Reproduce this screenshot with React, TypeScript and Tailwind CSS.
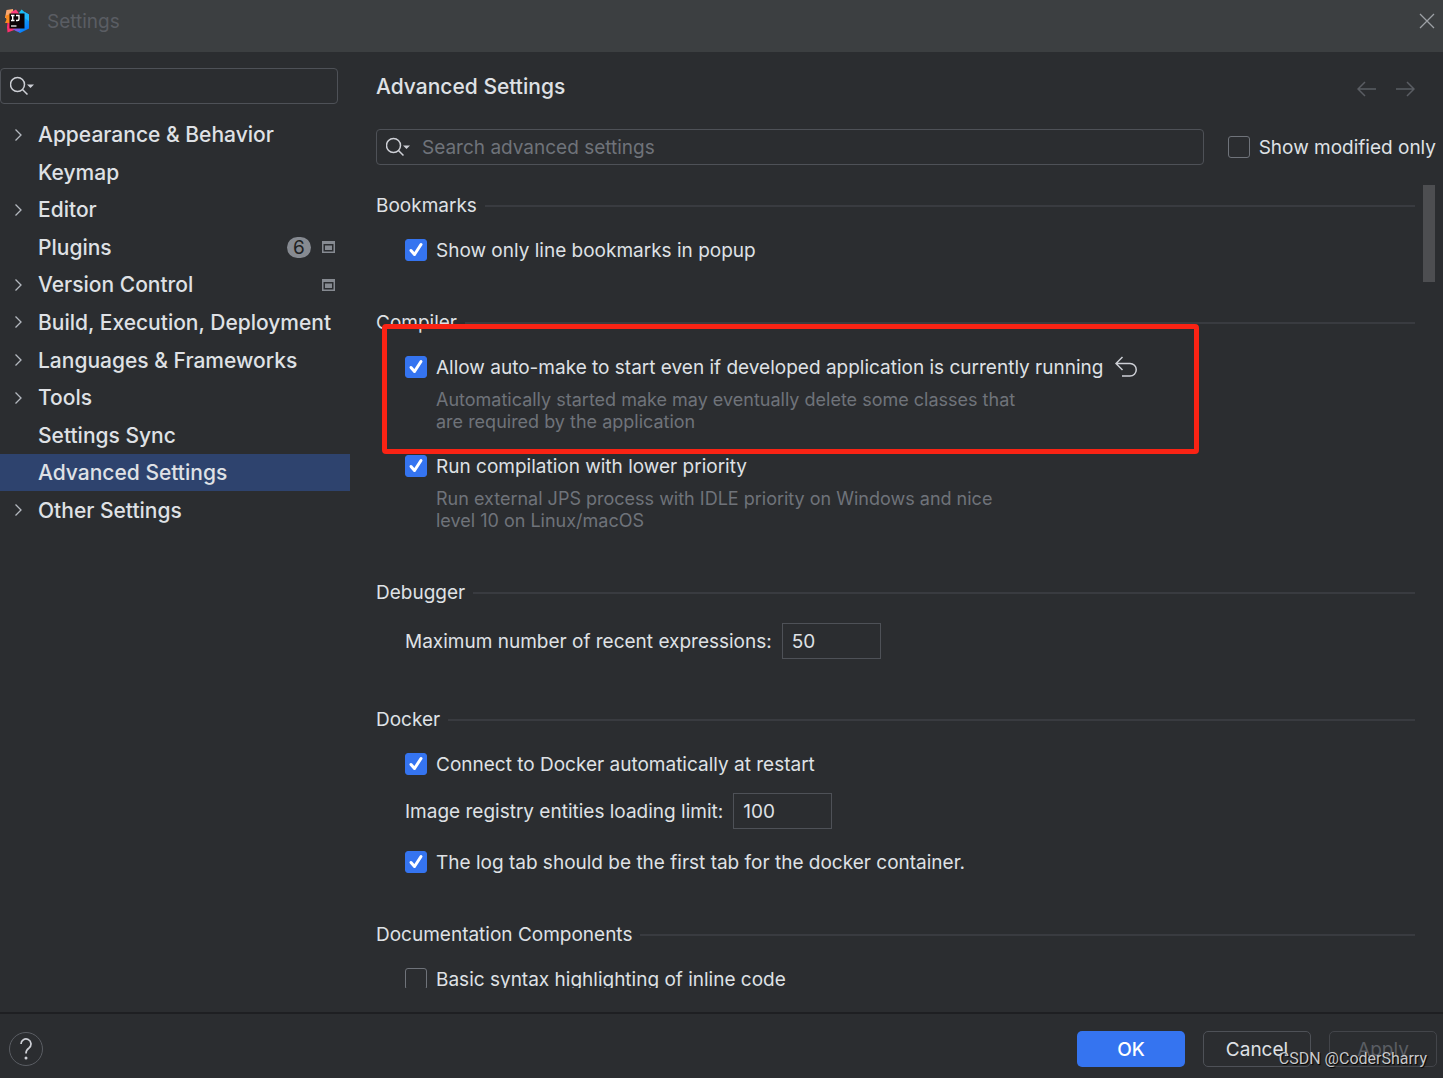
import { useState, type ReactNode } from 'react'

type TreeItem = {
  label: string
  expandable?: boolean
  updates?: number
  projectLevel?: boolean
}

const TREE: TreeItem[] = [
  { label: 'Appearance & Behavior', expandable: true },
  { label: 'Keymap' },
  { label: 'Editor', expandable: true },
  { label: 'Plugins', updates: 6, projectLevel: true },
  { label: 'Version Control', expandable: true, projectLevel: true },
  { label: 'Build, Execution, Deployment', expandable: true },
  { label: 'Languages & Frameworks', expandable: true },
  { label: 'Tools', expandable: true },
  { label: 'Settings Sync' },
  { label: 'Advanced Settings' },
  { label: 'Other Settings', expandable: true },
]

function IdeaLogo() {
  return (
    <svg className="h-6 w-6 shrink-0" viewBox="0 0 24 24" aria-hidden="true">
      <defs>
        <linearGradient id="cold" x1="0" y1="0" x2="0.5" y2="1">
          <stop offset="0" stopColor="#21d7f5" />
          <stop offset="1" stopColor="#087cfa" />
        </linearGradient>
      </defs>
      <path d="M14 4 16.500.5 19.500 3 24 5.500V19.500l-9 4.500-5-3z" fill="url(#cold)" />
      <path d="M19.500 3 24 5.500V12l-4.500-3z" fill="#22b8fa" />
      <path d="M1.500 1 8 0v8L0 9z" fill="#fba86f" />
      <path d="m6 3 5-2.500 3.500 4.500-8 3z" fill="#fe3d7b" />
      <path d="M0 7 5 5v10l-2.500-1L0 14l1.500-3.500z" fill="#fb8a1e" />
      <path d="M2.500 13.500 6 15l6 5-9.500 3.500L2 18z" fill="#fc2f6d" />
      <path d="M7 20 15 19v3l-3 .5z" fill="#7a5be0" />
      <path d="M4.500 4.500h15v15h-15z" fill="#0b0306" />
      <path d="M6 6.500h3.500M7.700 6.500v5M6 11.500h3.500M11 6.500h3v3.500q0 1.500-1.500 1.500H11" fill="none" stroke="#fff" strokeWidth="1.400" />
      <path d="M6 17h5.500" stroke="#fff" strokeWidth="1.200" />
    </svg>
  )
}

function SearchIcon() {
  return (
    <svg className="h-6 w-6 shrink-0" viewBox="0 0 24 24" fill="none" aria-hidden="true">
      <circle cx="7.500" cy="10.500" r="7" stroke="#ced0d6" strokeWidth="1.500" />
      <path d="m12.500 15.500 5 5" stroke="#ced0d6" strokeWidth="1.500" />
      <path d="M17 10.500h7L20.500 14z" fill="#ced0d6" />
    </svg>
  )
}

function ProjectIcon() {
  return (
    <svg className="h-3 w-[13px] shrink-0" viewBox="0 0 13 12" fill="none" aria-hidden="true">
      <path d="M0 0h13v12H0zM1.500 3v7.500h10V3z" fill="#868a91" fillRule="evenodd" />
      <path d="M3 4.500h7v4.500H3z" fill="#868a91" />
    </svg>
  )
}

function Checkbox({ label, checked = false }: { label: string; checked?: boolean }) {
  const [on, setOn] = useState(checked)
  return (
    <label className="flex h-6 items-center gap-[9px] whitespace-nowrap">
      <span className="grid shrink-0">
        <input
          type="checkbox"
          checked={on}
          onChange={e => setOn(e.target.checked)}
          className="col-start-1 row-start-1 h-[22px] w-[22px] appearance-none rounded-[3px] border border-[#6f737a] checked:border-[#3574f0] checked:bg-[#3574f0]"
        />
        {on && (
          <svg className="pointer-events-none col-start-1 row-start-1 h-[22px] w-[22px]" viewBox="0 0 22 22" fill="none">
            <path d="m6 11.500 3.500 4L16 5.500" stroke="#fff" strokeWidth="3" strokeLinecap="round" strokeLinejoin="round" />
          </svg>
        )}
      </span>
      {label}
    </label>
  )
}

function Field({ id, label, value }: { id: string; label: string; value: string }) {
  return (
    <div className="flex items-center gap-[10px]">
      <label htmlFor={id}>{label}</label>
      <input id={id} defaultValue={value} className="h-9 w-[99px] border border-[#4e5157] bg-transparent px-[9px] outline-none" />
    </div>
  )
}

function Hint({ children }: { children: ReactNode }) {
  return <p className="mt-[10px] max-w-[625px] pl-[31px] text-[18px] leading-[22px] text-[#6f737a]">{children}</p>
}

function Section({ title, children }: { title: string; children: ReactNode }) {
  return (
    <section className="relative mb-12">
      <div className="flex h-6 items-center gap-2">
        <h2>{title}</h2>
        <div className="mt-[2px] h-[2px] flex-1 bg-[#393b40]" />
      </div>
      <div className="pl-[29px]">{children}</div>
    </section>
  )
}

function Sidebar() {
  const [selected, setSelected] = useState('Advanced Settings')
  return (
    <aside className="w-[350px] shrink-0 pt-4">
      <div className="mr-3 flex h-9 items-center rounded-[4px] border border-[#4e5157] pl-[9px]">
        <SearchIcon />
        <input aria-label="Search settings" className="min-w-0 flex-1 bg-transparent px-2 outline-none" />
      </div>
      <ul className="mt-3 grid h-[413px] auto-rows-fr text-[21px] font-medium">
        {TREE.map(item => (
          <li key={item.label}>
            <button
              type="button"
              onClick={() => setSelected(item.label)}
              className={`flex h-full w-full items-center pr-[15px] pl-[14px] text-left ${selected === item.label ? 'bg-[#2e436e]' : ''}`}
            >
              <span className="w-6 shrink-0">
                {item.expandable && (
                  <svg className="h-3 w-[9px]" viewBox="0 0 9 12" fill="none" aria-hidden="true">
                    <path d="m1.500.5 5.500 5.500-5.500 5.500" stroke="#b4b8bf" strokeWidth="1.300" />
                  </svg>
                )}
              </span>
              <span className="flex-1 whitespace-nowrap">{item.label}</span>
              {item.updates && (
                <span className="mr-[11px] flex h-[21px] w-6 items-center justify-center rounded-full bg-[#868a91] text-[19px] font-normal text-[#1e1f22]">
                  {item.updates}
                </span>
              )}
              {item.projectLevel && <ProjectIcon />}
            </button>
          </li>
        ))}
      </ul>
    </aside>
  )
}

export default function App() {
  return (
    <div className="flex h-screen flex-col overflow-hidden bg-[#2b2d30] font-[Inter,sans-serif] text-[19px] leading-[25px] text-[#dfe1e5]">
      <header className="flex h-[52px] shrink-0 items-center bg-[#3c3f41] pr-2 pb-[10px] pl-[5px]">
        <IdeaLogo />
        <h1 className="ml-[18px] flex-1 text-[#5a5d63]">Settings</h1>
        <button type="button" aria-label="Close">
          <svg className="h-4 w-4" viewBox="0 0 16 16" fill="none">
            <path d="m1 1 14 14M15 1 1 15" stroke="#9da0a5" strokeWidth="1.300" />
          </svg>
        </button>
      </header>

      <div className="flex min-h-0 flex-1">
        <Sidebar />

        <main className="flex min-w-0 flex-1 flex-col pb-6 pl-[26px]">
          <div className="flex h-[46px] items-center justify-between pt-[22px] pr-7">
            <h2 className="text-[21px] font-medium">Advanced Settings</h2>
            <div className="flex gap-5 pt-[6px] text-[#5a5d63]">
              <button type="button" aria-label="Back" disabled>
                <svg className="h-4 w-[19px]" viewBox="0 0 19 16" fill="none">
                  <path d="M19 8H1M8 1 1 8l7 7" stroke="currentColor" strokeWidth="1.500" />
                </svg>
              </button>
              <button type="button" aria-label="Forward" disabled>
                <svg className="h-4 w-[19px]" viewBox="0 0 19 16" fill="none">
                  <path d="M0 8h18M11 1l7 7-7 7" stroke="currentColor" strokeWidth="1.500" />
                </svg>
              </button>
            </div>
          </div>

          <div className="mt-[31px] flex items-center gap-6 pr-[7px]">
            <div className="flex h-9 min-w-0 flex-1 items-center rounded-[4px] border border-[#4e5157] pl-[9px]">
              <SearchIcon />
              <input
                aria-label="Search advanced settings"
                placeholder="Search advanced settings"
                className="min-w-0 flex-1 bg-transparent px-3 outline-none placeholder:text-[#6f737a]"
              />
            </div>
            <Checkbox label="Show modified only" />
          </div>

          <div className="mt-5 flex min-h-0 flex-1 overflow-hidden">
            <div className="min-w-0 flex-1 pt-2">
              <Section title="Bookmarks">
                <div className="mt-[21px]">
                  <Checkbox label="Show only line bookmarks in popup" checked />
                </div>
              </Section>

              <Section title="Compiler">
                <div className="mt-[21px] flex h-6 items-center gap-3">
                  <Checkbox label="Allow auto-make to start even if developed application is currently running" checked />
                  <button type="button" aria-label="Reset to default">
                    <svg className="h-[22px] w-[22px]" viewBox="0 0 22 22" fill="none">
                      <path d="M7.500 1 1 7.500 7.500 14M1 7.500h14a6 6 0 0 1 0 12.500H7" stroke="#ced0d6" strokeWidth="1.500" />
                    </svg>
                  </button>
                </div>
                <Hint>Automatically started make may eventually delete some classes that are required by the application</Hint>
                <div className="mt-[21px]">
                  <Checkbox label="Run compilation with lower priority" checked />
                </div>
                <Hint>Run external JPS process with IDLE priority on Windows and nice level 10 on Linux/macOS</Hint>
                {/* highlight frame around the auto-make option */}
                <div className="pointer-events-none absolute top-[14px] right-[216px] left-[6px] h-[130px] rounded-[4px] border-5 border-[#fa2314]" />
              </Section>

              <Section title="Debugger">
                <div className="mt-[19px]">
                  <Field id="recent-expressions" label="Maximum number of recent expressions:" value="50" />
                </div>
              </Section>

              <Section title="Docker">
                <div className="mt-[21px] mb-[17px]">
                  <Checkbox label="Connect to Docker automatically at restart" checked />
                </div>
                <Field id="registry-limit" label="Image registry entities loading limit:" value="100" />
                <div className="mt-[21px]">
                  <Checkbox label="The log tab should be the first tab for the docker container." checked />
                </div>
              </Section>

              <Section title="Documentation Components">
                <div className="mt-[21px]">
                  <Checkbox label="Basic syntax highlighting of inline code" />
                </div>
              </Section>
            </div>
            <div className="mr-2 ml-2 h-[97px] w-3 shrink-0 bg-[#4d4e51]" />
          </div>
        </main>
      </div>

      <footer className="relative flex h-[66px] shrink-0 items-center border-t-2 border-[#1e1f22] pt-[6px] pr-[6px] pl-[9px]">
        <button type="button" aria-label="Help" className="h-[34px] w-[34px] rounded-full border border-[#5a5d63]">
          <svg className="mx-auto h-[22px] w-3" viewBox="0 0 12 22" fill="none">
            <path d="M1 6a5 5 0 1 1 8 4Q6 12 6 15.500" stroke="#ced0d6" strokeWidth="1.700" />
            <circle cx="6" cy="20" r="1.500" fill="#ced0d6" />
          </svg>
        </button>
        <div className="ml-auto flex gap-[18px]">
          <button type="button" className="h-9 w-[108px] rounded-[5px] bg-[#3574f0] font-medium text-white">OK</button>
          <button type="button" className="h-9 w-[108px] rounded-[5px] border border-[#4e5157]">Cancel</button>
          <button type="button" disabled className="h-9 w-[108px] rounded-[5px] border border-[#43454a] text-[#5a5d63]">Apply</button>
        </div>
        <span className="pointer-events-none absolute right-4 bottom-[7px] font-[Roboto,sans-serif] text-[16px] text-[#c8c9cb] [text-shadow:1px_1px_1px_#000]">
          CSDN @CoderSharry
        </span>
      </footer>
    </div>
  )
}
